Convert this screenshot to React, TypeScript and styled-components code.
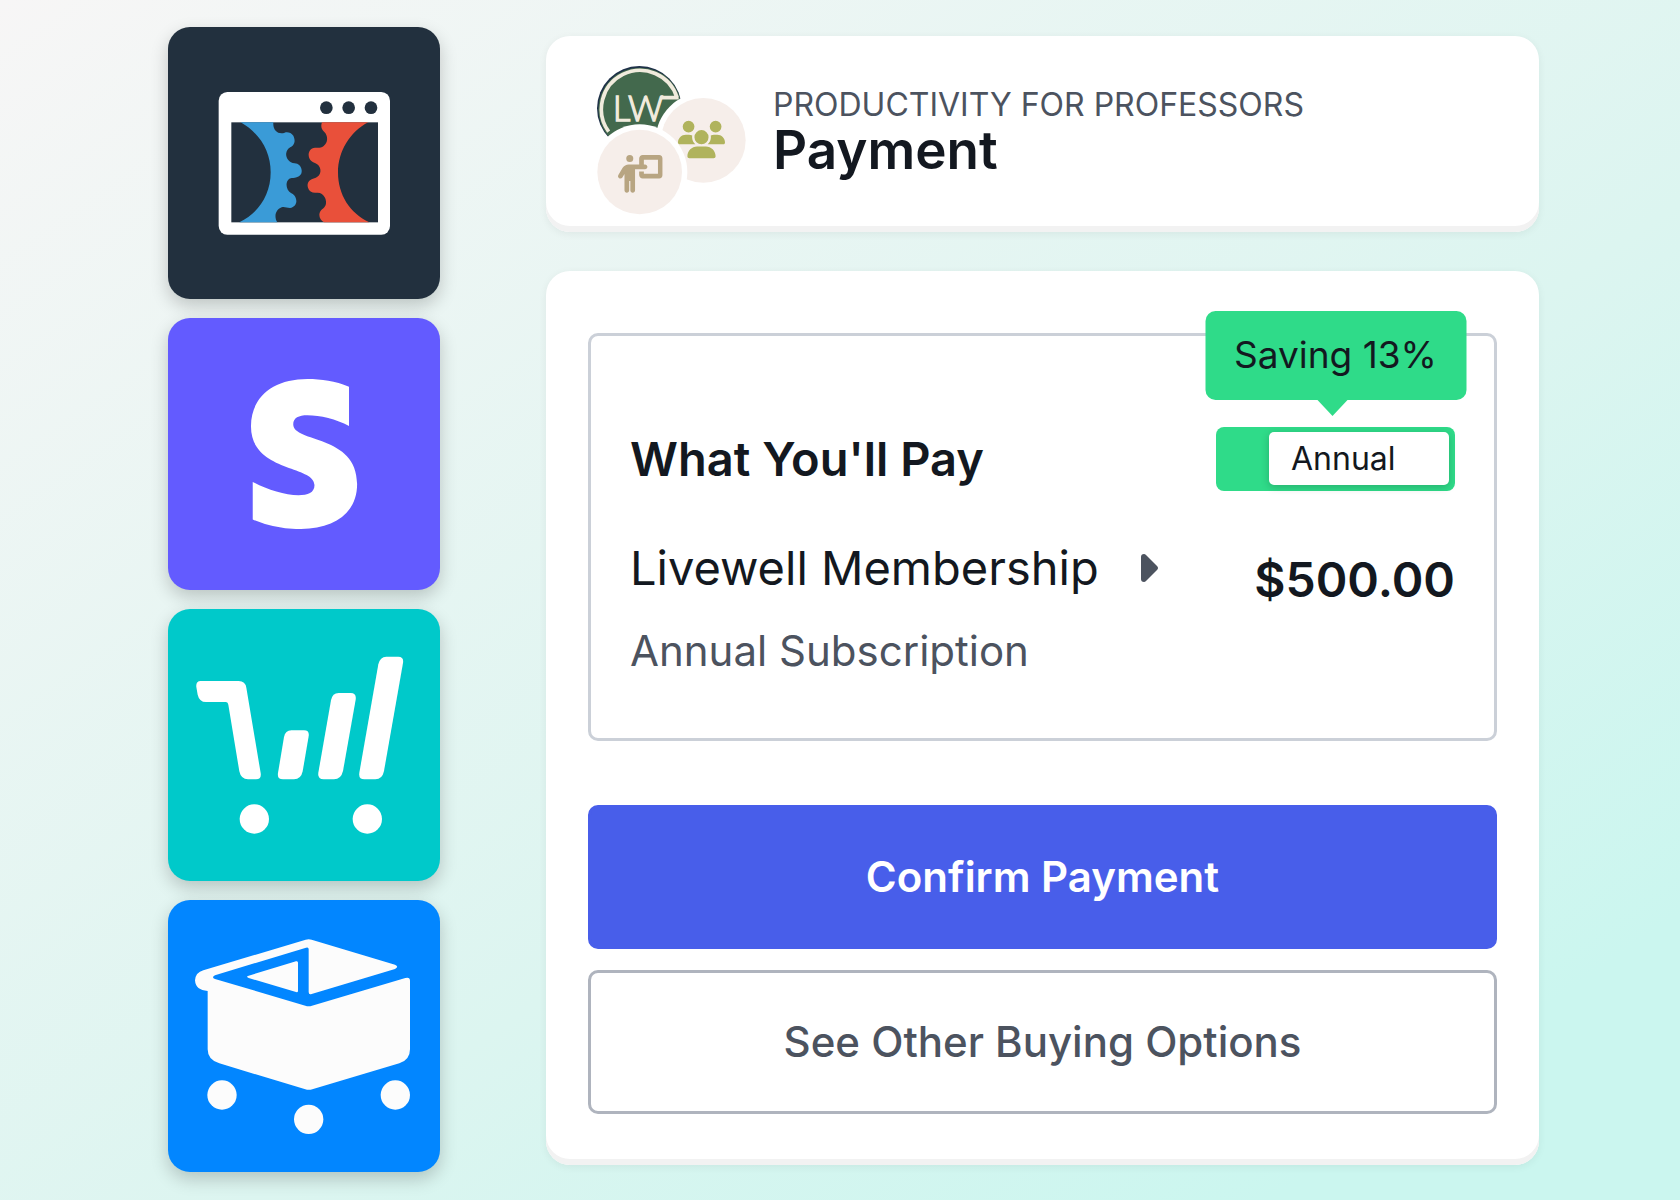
import React, { useState } from "react";
import styled, { createGlobalStyle } from "styled-components";
import { FaStripeS } from "react-icons/fa";
import { FaPersonChalkboard, FaUsers } from "react-icons/fa6";

const ink = "#131820";
const slate = "#4c535f";
const green = "#2fdb89";

const GlobalStyle = createGlobalStyle`
  *, *::before, *::after { box-sizing: border-box; }
  body { margin: 0; font-family: Inter, "Liberation Sans", sans-serif; color: ${ink}; }
  h1, h2, p { margin: 0; }
`;

const Page = styled.div`
  display: flex;
  align-items: flex-start;
  gap: 106px;
  min-height: 100vh;
  padding: 27px 141px 27px 168px;
  background: linear-gradient(145deg, #f7f6f6 0%, #dcf5f0 58%, #cbf6ef 88%, #cbf6ef 100%);
`;

const Tools = styled.aside`
  display: flex;
  flex-direction: column;
  flex: none;
  gap: 19px;
`;

const Tile = styled.div<{ $color: string }>`
  display: flex;
  align-items: center;
  justify-content: center;
  width: 272px;
  height: 272px;
  border-radius: 22px;
  background: ${(p) => p.$color};
  color: #fff;
  box-shadow: 0 7px 18px rgba(0, 0, 0, 0.2);
`;

const TileArt = styled.svg`
  width: 100%;
  height: 100%;
`;

const Checkout = styled.main`
  display: flex;
  flex: 1;
  flex-direction: column;
  gap: 39px;
  min-width: 0;
  padding-top: 9px;
`;

const Card = styled.section`
  border-radius: 24px;
  background: #fff;
  box-shadow: inset 0 -6px 0 #f2f2f2, 0 2px 8px rgba(0, 0, 0, 0.06);
`;

const HeaderCard = styled(Card)`
  display: flex;
  align-items: flex-start;
  gap: 27px;
  padding: 30px 51px 17px;
`;

const Badges = styled.svg`
  display: block;
  flex: none;
  width: 149px;
  height: 149px;
`;

const Heading = styled.div`
  padding-top: 21px;
`;

const Overline = styled.p`
  font-size: 32px;
  line-height: 36px;
  color: ${slate};
`;

const Title = styled.h1`
  font-size: 53px;
  font-weight: 600;
  line-height: 54px;
`;

const PaymentCard = styled(Card)`
  padding: 62px 42px 51px;
`;

const Summary = styled.div`
  padding: 91px 39px 61px;
  border: 3px solid #cbd0d8;
  border-radius: 10px;
`;

const Row = styled.div`
  display: flex;
  align-items: center;
  justify-content: space-between;
`;

const Subtitle = styled.h2`
  font-size: 47px;
  font-weight: 600;
  line-height: 60px;
`;

const PlanPicker = styled.div`
  position: relative;
`;

const Tooltip = styled.div`
  position: absolute;
  bottom: calc(100% + 27px);
  left: 50%;
  width: 261px;
  padding: 19px 0 21px;
  transform: translateX(-50%);
  border-radius: 10px;
  background: ${green};
  font-size: 37px;
  line-height: 49px;
  text-align: center;
  white-space: nowrap;

  &::after {
    content: "";
    position: absolute;
    top: 100%;
    left: 112px;
    border: 15px solid transparent;
    border-top: 16px solid ${green};
    border-bottom: 0;
  }
`;

const Track = styled.label<{ $on: boolean }>`
  display: flex;
  justify-content: ${(p) => (p.$on ? "flex-end" : "flex-start")};
  width: 239px;
  padding: 5px 6px 6px;
  border-radius: 8px;
  background: ${green};
  cursor: pointer;
`;

const HiddenCheck = styled.input`
  position: absolute;
  width: 1px;
  height: 1px;
  margin: 0;
  opacity: 0;
`;

const Knob = styled.span`
  width: 180px;
  padding-left: 22px;
  border-radius: 5px;
  background: #fff;
  box-shadow: 0 2px 8px rgba(0, 0, 0, 0.2);
  font-size: 32px;
  line-height: 53px;
`;

const Item = styled(Row)`
  align-items: flex-start;
  margin-top: 47px;
`;

const ItemName = styled.div`
  display: flex;
  align-items: center;
  gap: 42px;
  margin-bottom: 27px;
  font-size: 47px;
  line-height: 60px;
`;

const ItemNote = styled.p`
  font-size: 42px;
  line-height: 52px;
  color: ${slate};
`;

const Price = styled.p`
  padding-top: 12px;
  font-size: 48px;
  font-weight: 600;
  line-height: 60px;
`;

const Disclosure = styled.button`
  display: flex;
  padding: 0;
  border: 0;
  background: none;
  color: ${slate};
  cursor: pointer;
`;

const Actions = styled.div`
  display: flex;
  flex-direction: column;
  gap: 21px;
  margin-top: 64px;
`;

const ActionButton = styled.button<{ $primary?: boolean }>`
  padding: 43px 0;
  border: 3px solid ${(p) => (p.$primary ? "#485eea" : "#afb4be")};
  border-radius: 10px;
  background: ${(p) => (p.$primary ? "#485eea" : "#fff")};
  color: ${(p) => (p.$primary ? "#fff" : slate)};
  font-family: inherit;
  font-size: 42px;
  font-weight: ${(p) => (p.$primary ? 600 : 500)};
  line-height: 52px;
  cursor: pointer;
`;

const FunnelLogo = () => (
  <TileArt viewBox="54 51 816 816" role="img" aria-label="ClickFunnels">
    <rect x="206" y="246" width="514" height="428" rx="26" fill="#fff" />
    <rect x="244" y="337" width="440" height="300" fill="#22303e" />
    <g fill="#22303e">
      <circle cx="529" cy="293" r="19" />
      <circle cx="596" cy="293" r="19" />
      <circle cx="663" cy="293" r="19" />
    </g>
    <path
      fill="#3a9bd7"
      d="M272 337C330 370 362 425 362 487C362 555 325 610 268 637H382C372 622 375 600 395 592C403 589 410 594 420 594C434 592 440 580 439 572C438 558 430 552 423 549C408 540 405 517 417 507C425 501 430 506 440 502C452 498 456 490 455 481C454 468 445 461 434 460C415 458 406 440 409 428C412 412 425 412 430 404C436 396 434 385 430 377C424 368 412 365 404 368C385 374 368 362 370 337Z"
    />
    <path
      fill="#e9503a"
      d="M516 337C510 352 518 362 523 366C535 378 534 398 521 408C512 415 503 413 495 413C482 413 475 425 476 436C477 450 486 456 495 459C515 466 516 492 502 500C496 505 490 505 485 508C474 513 471 523 474 533C477 544 488 550 500 548C522 546 532 570 527 585C523 597 509 598 508 614C508 625 514 632 522 637H658C600 610 564 555 564 487C564 425 600 365 655 337Z"
    />
  </TileArt>
);

const ChartCartLogo = () => (
  <TileArt viewBox="54 28 816 816" fill="#fff" role="img" aria-label="ThriveCart">
    <path d="M152 244H266Q286 244 289 264L332 520Q335 539 318 539H294Q273 539 268 515L235 315Q234 307 228 307H168Q148 307 143 285L139 262Q137 244 152 244Z" />
    <path d="M424 392H462Q479 392 476 410L458 515Q453 539 432 539H399Q381 539 384 520L402 412Q406 392 424 392Z" />
    <path d="M566 280H602Q620 280 617 300L579 514Q573 539 552 539H521Q502 539 505 519L543 302Q547 280 566 280Z" />
    <path d="M709 171H745Q762 171 759 190L702 514Q697 539 676 539H643Q625 539 628 519L685 194Q690 171 709 171Z" />
    <circle cx="313" cy="658" r="44" />
    <circle cx="652" cy="658" r="44" />
  </TileArt>
);

const BoxCartLogo = () => (
  <TileArt viewBox="54 32 816 816" fill="#fcfcfc" role="img" aria-label="SamCart">
    <path d="M160 243L467 151Q476 148 485 151L735 226Q748 232 735 239L485 314Q476 317 476 308V180Q476 172 468 175L195 258Q183 264 195 269L466 349Q476 352 486 349L766 266Q780 262 780 274V480Q780 512 748 522L487 600Q476 603 466 600L208 522Q173 512 173 480V305Q137 303 135 273Q137 249 160 243Z" />
    <path d="M296 259L438 216Q444 214 444 220V304Q444 310 438 308L296 266Q286 262 296 259Z" />
    <circle cx="216" cy="617" r="44" />
    <circle cx="476" cy="690" r="44" />
    <circle cx="736" cy="617" r="44" />
  </TileArt>
);

const CourseBadges = () => (
  <Badges viewBox="51 47 447 447" aria-hidden="true">
    <circle cx="178" cy="174" r="127" fill="#1e3048" />
    <circle cx="180" cy="177" r="125" fill="#43694d" />
    <path
      d="M291 142A116 116 0 1 0 86 244M242 142H296"
      fill="none"
      stroke="#f1ebdd"
      strokeWidth="11"
    />
    <text
      x="98"
      y="213"
      fill="#f1ebdd"
      stroke="#f1ebdd"
      strokeWidth="4"
      fontFamily="Lato, sans-serif"
      fontSize="104"
      fontWeight="300"
    >
      LW
    </text>
    <circle cx="370" cy="270" r="143" fill="#fff" />
    <circle cx="370" cy="270" r="127" fill="#f6eeea" />
    <FaUsers x="294" y="197" size={141} color="#b0b35c" />
    <circle cx="179" cy="365" r="143" fill="#fff" />
    <circle cx="179" cy="365" r="127" fill="#f6eeea" />
    <FaPersonChalkboard x="107" y="300" size={141} color="#b8a582" />
  </Badges>
);

export default function App() {
  const [annual, setAnnual] = useState(true);

  return (
    <>
      <GlobalStyle />
      <Page>
        <Tools>
          <Tile $color="#22303e">
            <FunnelLogo />
          </Tile>
          <Tile $color="#635bff">
            <FaStripeS size={150} aria-label="Stripe" />
          </Tile>
          <Tile $color="#00c9ca">
            <ChartCartLogo />
          </Tile>
          <Tile $color="#0286ff">
            <BoxCartLogo />
          </Tile>
        </Tools>

        <Checkout>
          <HeaderCard>
            <CourseBadges />
            <Heading>
              <Overline>PRODUCTIVITY FOR PROFESSORS</Overline>
              <Title>Payment</Title>
            </Heading>
          </HeaderCard>

          <PaymentCard>
            <Summary>
              <Row>
                <Subtitle>What You'll Pay</Subtitle>
                <PlanPicker>
                  <Tooltip role="tooltip">Saving 13%</Tooltip>
                  <Track $on={annual}>
                    <HiddenCheck
                      type="checkbox"
                      role="switch"
                      checked={annual}
                      onChange={(e) => setAnnual(e.target.checked)}
                    />
                    <Knob>Annual</Knob>
                  </Track>
                </PlanPicker>
              </Row>
              <Item>
                <div>
                  <ItemName>
                    Livewell Membership
                    <Disclosure type="button" aria-label="Show details">
                      <svg width="17" height="28" viewBox="0 0 17 28" fill="currentColor">
                        <path d="M0 3Q0 0 3 0Q4 0 5 1L16 12Q18 14 16 16L5 27Q4 28 3 28Q0 28 0 25Z" />
                      </svg>
                    </Disclosure>
                  </ItemName>
                  <ItemNote>Annual Subscription</ItemNote>
                </div>
                <Price>$500.00</Price>
              </Item>
            </Summary>
            <Actions>
              <ActionButton type="button" $primary>
                Confirm Payment
              </ActionButton>
              <ActionButton type="button">See Other Buying Options</ActionButton>
            </Actions>
          </PaymentCard>
        </Checkout>
      </Page>
    </>
  );
}
